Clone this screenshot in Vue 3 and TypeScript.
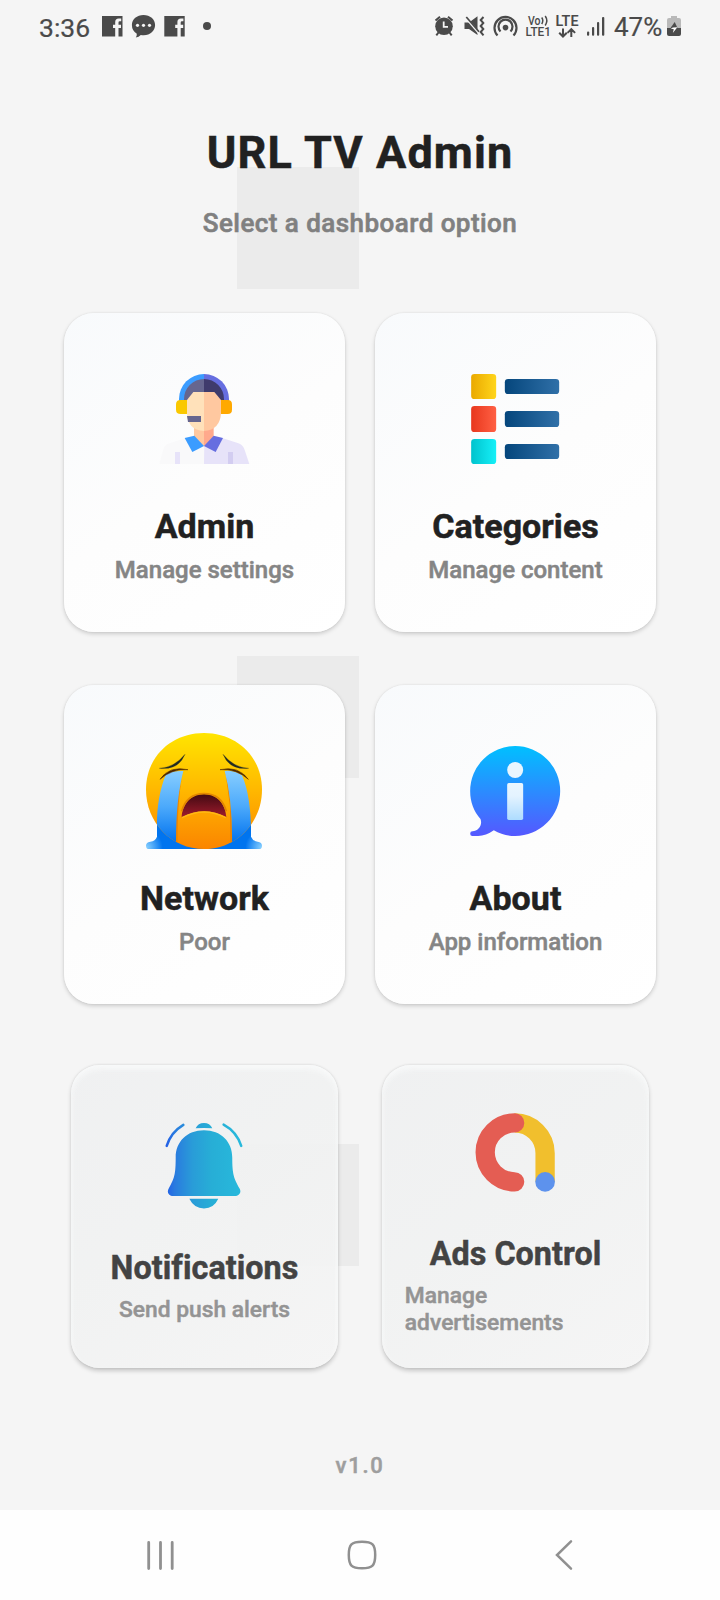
<script setup lang="ts">
type IconName = 'admin' | 'categories' | 'network' | 'about' | 'bell' | 'ads'

interface DashboardCard {
  icon: IconName
  title: string
  subtitle: string
  disabled?: boolean
}

const cards: DashboardCard[] = [
  { icon: 'admin', title: 'Admin', subtitle: 'Manage settings' },
  { icon: 'categories', title: 'Categories', subtitle: 'Manage content' },
  { icon: 'network', title: 'Network', subtitle: 'Poor' },
  { icon: 'about', title: 'About', subtitle: 'App information' },
  { icon: 'bell', title: 'Notifications', subtitle: 'Send push alerts', disabled: true },
  { icon: 'ads', title: 'Ads Control', subtitle: 'Manage advertisements', disabled: true },
]
</script>

<template>
  <div class="screen">
    <div class="pattern" aria-hidden="true">
      <span class="tile"></span>
      <span class="tile"></span>
      <span class="tile"></span>
    </div>

    <div class="status">
      <span class="clock">3:36</span>
      <svg class="notices" width="116" height="52" viewBox="98 0 116 52">
        <g fill="#4a4a4a">
          <path d="M102 16h20.500v20.500h-4v-8.500h2.500v-3.200h-2.500v-2.300q0-1.200 1.200-1.200h1.500v-2.900h-2.500q-3.500 0-3.500 3.700v2.700h-2.200v3.200h2.200v8.500h-13.200z" />
          <path d="M164.300 16h20.400v20.500h-4v-8.500h2.500v-3.200h-2.500v-2.300q0-1.200 1.200-1.200h1.500v-2.900h-2.500q-3.500 0-3.500 3.700v2.700h-2.200v3.200h2.200v8.500h-13.100z" />
          <path d="M143.500 15c6.500 0 11.600 4.300 11.600 10s-5 10.200-11.300 10.200q-1.600 0-3-.3-2 2.200-5 2.700 1.200-1.900 1-3.900-4.900-3-4.900-8.700c0-5.700 5.100-10 11.600-10z" />
          <circle cx="207" cy="26" r="4" />
        </g>
        <g fill="#f5f5f5"><circle cx="137.500" cy="25.300" r="1.600" /><circle cx="143.500" cy="25.300" r="1.600" /><circle cx="149.500" cy="25.300" r="1.600" /></g>
      </svg>
      <span class="spacer"></span>
      <svg class="signals" width="178" height="52" viewBox="432 0 178 52">
        <g fill="none" stroke="#4a4a4a" stroke-width="2">
          <circle cx="444" cy="26.300" r="8.800" fill="#4a4a4a" stroke="none" />
          <path d="M435.500 20.500l4.500-3.800M452.500 20.500l-4.500-3.800M438.500 32.500l-2.200 2.800M449.500 32.500l2.200 2.800" />
          <path d="M443.700 21.500v5.300h4.300" stroke="#f5f5f5" stroke-width="1.800" />
          <path d="M464.500 22.500h4.500l8.500-6.300v18.800l-8.500-6h-4.500z" fill="#4a4a4a" stroke="none" />
          <path d="M465 16.800l15 17.500" stroke="#f5f5f5" stroke-width="2.400" />
          <path d="M466.300 17l12.700 14.800" stroke-width="1.700" />
          <path d="M483.500 17l-2.800 3 2.600 3-2.600 3 2.600 3-2.600 3 2.800 3.300" />
          <path d="M497.500 35.500a11 11 0 1 1 16 0" stroke-width="2.200" />
          <path d="M500.500 31.500a7 7 0 1 1 10 0" stroke-width="2.200" />
          <circle cx="505.500" cy="27.600" r="2.800" fill="#4a4a4a" stroke="none" />
          <path d="M563 28.500v7.500m-3.800-3.300l3.800 3.800 3.800-3.800M571.300 37v-7.500m-3.800 3.400l3.800-3.800 3.800 3.800" />
          <path d="M541.700 17.500q2.200 3 0 6.500M545.200 16q3.200 4.500 0 9.500" stroke-width="1.500" />
        </g>
        <g fill="#4a4a4a">
          <rect x="587" y="31.500" width="2.200" height="4.300" rx="1" />
          <rect x="592" y="27" width="2.200" height="8.800" rx="1" />
          <rect x="597" y="22" width="2.200" height="13.800" rx="1" />
          <rect x="602" y="17" width="2.300" height="18.800" rx="1" />
          <text x="528" y="24.800" font-size="12" font-weight="500" textLength="12.500" lengthAdjust="spacingAndGlyphs">Vo</text>
          <text x="525.500" y="36" font-size="12" font-weight="500" textLength="25.500" lengthAdjust="spacingAndGlyphs">LTE1</text>
          <text x="555.500" y="25.500" font-size="14" font-weight="600" textLength="23" lengthAdjust="spacingAndGlyphs">LTE</text>
        </g>
      </svg>
      <span class="percent">47%</span>
      <svg class="battery" width="14" height="52" viewBox="667 0 14 52">
        <path d="M671 16h6v2h2q2 0 2 2v8.500h-14v-8.500q0-2 2-2h2z" fill="#b9b9b9" />
        <path d="M667 28h14v6q0 2-2 2h-10q-2 0-2-2z" fill="#4a4a4a" />
        <path d="M674.700 22l-4.200 6h7z" fill="#4a4a4a" />
        <path d="M677.300 27.300l-4.500 5.800 1-3.800-3-.8 2.200-1z" fill="#fff" />
      </svg>
    </div>

    <header class="heading">
      <h1>URL TV Admin</h1>
      <p>Select a dashboard option</p>
    </header>

    <main class="grid">
      <section v-for="card in cards" :key="card.title" class="card" :class="{ disabled: card.disabled }">
        <div class="icon-box">
          <svg v-if="card.icon === 'admin'" width="90" height="90" viewBox="330 222 270 270">
            <path d="M463 415l-58 0-47 15q-14 4-19 22l-11 40h135z" fill="#f9f9fa" />
            <path d="M463 415h56l44 14q16 5 21 21l14 42H462z" fill="#e7e3f9" />
            <path d="M375 456h15v36h-15z" fill="#e7e3f9" />
            <path d="M534 456h15v36h-15z" fill="#d3cdf1" />
            <path d="M432 380h31v60l-31-30z" fill="#ffc8a0" />
            <path d="M462 380h29v30l-29 29z" fill="#ffa98c" />
            <path d="M404 414l29-7 29 31-35 18z" fill="#3b9cff" />
            <path d="M519 414l-28-7-29 31 35 18z" fill="#666ee0" />
            <path d="M387 304v-7a75 75 0 0 1 75-75v82z" fill="#3b9cff" />
            <path d="M462 222a75 75 0 0 1 75 75v7h-75z" fill="#666ee0" />
            <path d="M402 304v-6a60 60 0 0 1 60-61v67z" fill="#66668f" />
            <path d="M462 237a60 60 0 0 1 60 61v6h-60z" fill="#3f3b6c" />
            <path d="M411 300l19-24h32v117q-50-3-51-55z" fill="#ffe1ba" />
            <path d="M462 276h31l20 24v38q-2 51-51 55z" fill="#ffc8a0" />
            <path d="M392 300h19v42h-19q-14 0-14-13v-16q0-13 14-13z" fill="#fac800" />
            <path d="M513 300h20q13 0 13 13v16q0 13-13 13h-20z" fill="#ffa900" />
            <path d="M411 348h42v18h-39z" fill="#66668f" />
          </svg>

          <svg v-else-if="card.icon === 'categories'" width="90" height="90" viewBox="332.500 222 270 270">
            <defs>
              <linearGradient id="cat-yellow"><stop stop-color="#eaa900" /><stop offset="1" stop-color="#ffd51b" /></linearGradient>
              <linearGradient id="cat-red"><stop stop-color="#e8371d" /><stop offset="1" stop-color="#ff6044" /></linearGradient>
              <linearGradient id="cat-cyan"><stop stop-color="#00c3cd" /><stop offset="1" stop-color="#16f0f8" /></linearGradient>
              <linearGradient id="cat-blue"><stop stop-color="#05467c" /><stop offset="1" stop-color="#3070a8" /></linearGradient>
            </defs>
            <rect x="333" y="222" width="75" height="75" rx="10" fill="url(#cat-yellow)" />
            <rect x="333" y="318" width="75" height="78" rx="10" fill="url(#cat-red)" />
            <rect x="333" y="417" width="75" height="75" rx="10" fill="url(#cat-cyan)" />
            <rect x="434" y="237" width="163" height="45" rx="10" fill="url(#cat-blue)" />
            <rect x="434" y="333" width="163" height="48" rx="10" fill="url(#cat-blue)" />
            <rect x="434" y="432" width="163" height="45" rx="10" fill="url(#cat-blue)" />
          </svg>

          <svg v-else-if="card.icon === 'network'" width="116" height="116" viewBox="291 279 348 348">
            <defs>
              <linearGradient id="face" x2="0" y2="1"><stop stop-color="#ffe500" /><stop offset=".5" stop-color="#ffb700" /><stop offset="1" stop-color="#fb8500" /></linearGradient>
              <linearGradient id="tear" gradientUnits="userSpaceOnUse" x1="0" y1="392" x2="0" y2="610"><stop stop-color="#88ceff" /><stop offset=".5" stop-color="#4ba9fb" /><stop offset="1" stop-color="#0071ee" /></linearGradient>
              <linearGradient id="mouth" x2="0" y2="1"><stop stop-color="#410a12" /><stop offset="1" stop-color="#a01b2c" /></linearGradient>
              <radialGradient id="puddle-left" gradientUnits="userSpaceOnUse" cx="288" cy="622" r="50"><stop stop-color="#8bd2ff" /><stop offset="1" stop-color="#0074ef" /></radialGradient>
              <radialGradient id="puddle-right" gradientUnits="userSpaceOnUse" cx="636" cy="622" r="50"><stop stop-color="#8bd2ff" /><stop offset="1" stop-color="#0074ef" /></radialGradient>
              <clipPath id="face-clip"><path d="M462 279c98 0 174 71 174 170 0 97-75 178-174 178S288 546 288 449c0-99 76-170 174-170z" /></clipPath>
            </defs>
            <path d="M321 550v40q-5 13-20 15-13 2-13 12 0 10 9 10h165v-77z" fill="url(#puddle-left)" />
            <path d="M603 550v40q5 13 20 15 13 2 13 12 0 10-9 10H462v-77z" fill="url(#puddle-right)" />
            <path d="M462 279c98 0 174 71 174 170 0 97-75 178-174 178S288 546 288 449c0-99 76-170 174-170z" fill="url(#face)" />
            <g clip-path="url(#face-clip)">
              <path d="M399 393q-17 84-16 218h-5V500zM526 393q20 84 20 218h-6V500z" fill="#ed8400" />
              <path d="M349 400q28-9 51-7-23 89-22 219v20h-57v-56c-2-65 6-123 28-176z" fill="url(#tear)" />
              <path d="M524 393q28-3 52 13 28 65 27 180v46h-57v-20q2-130-22-219z" fill="url(#tear)" />
            </g>
            <path d="M330 418q28-42 84-29-48-3-84 29zM595 418q-30-42-85-29 49-3 85 29z" fill="#4b2400" stroke="#4b2400" stroke-width="1.500" />
            <path d="M328 385q46-3 77-42-19 48-77 42zM596 385q-46-3-77-42 19 48 77 42z" fill="#222b24" stroke="#222b24" stroke-width=".8" />
            <path d="M395 532c2-37 25-70 67-70s65 33 67 70q-65-36-134 0z" fill="url(#mouth)" />
            <path d="M395 514q15-53 67-53t67 53" fill="none" stroke="#e38700" stroke-width="5" />
            <path d="M396 533q66-34 132 0" fill="none" stroke="#ffb914" stroke-width="4" />
          </svg>

          <svg v-else-if="card.icon === 'about'" width="90" height="90" viewBox="332.500 228 270 270">
            <defs>
              <linearGradient id="bubble" x2="0" y2="1"><stop stop-color="#00c0ff" /><stop offset="1" stop-color="#5558ff" /></linearGradient>
              <linearGradient id="letter" x2="0" y2="1"><stop stop-color="#eaf6ff" /><stop offset=".35" stop-color="#e4f3ff" /><stop offset="1" stop-color="#addcff" /></linearGradient>
            </defs>
            <path d="M465 228a135 135 0 1 1 0 270q-36 0-64-17-24 17-47 17h-17q-7 0-7-7t7-7c17 0 31-18 24-37-20-23-31-50-31-84a135 135 0 0 1 135-135z" fill="url(#bubble)" />
            <circle cx="465" cy="300" r="24" fill="#e9f6ff" />
            <rect x="441" y="339" width="48" height="111" rx="5" fill="url(#letter)" />
          </svg>

          <svg v-else-if="card.icon === 'bell'" width="90" height="90" viewBox="336.500 219 257 257">
            <defs>
              <linearGradient id="bell-fill" gradientUnits="userSpaceOnUse" x1="347" y1="0" x2="577" y2="0"><stop stop-color="#235fe7" /><stop offset=".12" stop-color="#297bdf" /><stop offset=".35" stop-color="#299cd8" /><stop offset=".6" stop-color="#27aed6" /><stop offset="1" stop-color="#28b9dc" /></linearGradient>
            </defs>
            <g fill="url(#bell-fill)">
              <path d="M462 241c51 0 85 34 85 82 0 51 5 63 22 93 7 12-2 23-15 23H370c-13 0-21-11-14-23 17-30 21-42 21-93 0-48 34-82 85-82z" />
              <path d="M437 235q7-16 25-16t25 16q-25-2-50 0zM418 447h87q-13 29-43 29t-44-29z" />
            </g>
            <path d="M400 225q-37 22-50 63M521 224q39 21 53 64" fill="none" stroke="url(#bell-fill)" stroke-width="7.500" stroke-linecap="round" />
          </svg>

          <svg v-else width="82" height="82" viewBox="349 190 234 234">
            <path d="M462 218.500a91 91 0 0 1 91.500 91V395" fill="none" stroke="#f1bf2d" stroke-width="58" />
            <path d="M462 218.500a88 88 0 0 0 0 177" fill="none" stroke="#e45d53" stroke-width="58" stroke-linecap="round" />
            <circle cx="553.500" cy="395.500" r="29.500" fill="#5d92ed" />
          </svg>
        </div>
        <h2>{{ card.title }}</h2>
        <p>{{ card.subtitle }}</p>
      </section>
    </main>

    <footer class="version">v1.0</footer>

    <nav class="navbar">
      <svg width="28" height="30" viewBox="147 1540 28 30">
        <path d="M148.700 1542.500v26M160.500 1542.500v26M172.200 1542.500v26" fill="none" stroke="#909090" stroke-width="2.800" stroke-linecap="round" />
      </svg>
      <svg class="home" width="30" height="30" viewBox="346.500 1540.500 30 30">
        <path d="M361.500 1542.300c10.500 0 13.200 2.700 13.200 13.200s-2.700 13.200-13.200 13.200-13.200-2.700-13.200-13.200 2.700-13.200 13.200-13.200z" fill="none" stroke="#909090" stroke-width="2.500" />
      </svg>
      <svg width="18" height="30" viewBox="555 1540.500 18 30">
        <path d="M571 1541.800l-14 13.700 14 13.700" fill="none" stroke="#909090" stroke-width="2.500" stroke-linecap="round" />
      </svg>
    </nav>
  </div>
</template>

<style>
body {
  margin: 0;
  background: #f5f5f5;
}
</style>

<style scoped>
.screen {
  position: relative;
  isolation: isolate;
  width: 720px;
  height: 1600px;
  display: flex;
  flex-direction: column;
  overflow: hidden;
  background: #f5f5f5;
  font-family: Roboto, "Liberation Sans", sans-serif;
}

h1, h2, p {
  margin: 0;
}

svg {
  display: block;
  flex: none;
  overflow: visible;
}

.pattern {
  position: absolute;
  z-index: -1;
  top: 167px;
  left: 237px;
  display: flex;
  flex-direction: column;
  gap: 366.500px;
}

.tile {
  width: 122px;
  height: 122px;
  background: #ebebeb;
}

.status {
  display: flex;
  align-items: center;
  height: 52px;
  padding: 0 39px 0 39px;
  color: #4a4a4a;
}

.clock {
  width: 59px;
  padding-top: 2px;
  font-size: 26.500px;
  -webkit-text-stroke: 0.2px currentColor;
  white-space: nowrap;
}

.spacer {
  flex: 1;
}

.percent {
  width: 57px;
  padding: 2px 0 0 4px;
  font-size: 26px;
  -webkit-text-stroke: 0.2px currentColor;
  box-sizing: border-box;
  white-space: nowrap;
}

.heading {
  height: 261px;
  box-sizing: border-box;
  padding-top: 75px;
  text-align: center;
}

h1 {
  height: 52px;
  font-size: 45px;
  line-height: 52px;
  font-weight: 700;
  letter-spacing: 1.1px;
  -webkit-text-stroke: 0.5px currentColor;
  color: #212121;
}

.heading p {
  margin-top: 28px;
  font-size: 26px;
  line-height: 32px;
  font-weight: 500;
  letter-spacing: 0.45px;
  -webkit-text-stroke: 0.6px currentColor;
  color: #808080;
}

.grid {
  display: grid;
  grid-template-columns: 281px 281px;
  grid-auto-rows: 319px;
  gap: 53px 30px;
  justify-content: center;
}

.card {
  display: flex;
  flex-direction: column;
  align-items: center;
  justify-content: center;
  box-sizing: border-box;
  padding: 0 24px;
  border-radius: 30px;
  background: linear-gradient(145deg, #f8fafc 0%, #fdfdfd 50%, #ffffff 100%);
  box-shadow: 0 2px 4px rgba(0, 0, 0, 0.17), 0 0 2px rgba(0, 0, 0, 0.09);
}

.card.disabled {
  transform: scale(0.95);
  background: linear-gradient(145deg, rgba(239, 240, 241, 0.92), rgba(241, 242, 242, 0.92) 50%, rgba(245, 245, 245, 0.92));
  box-shadow: 0 3px 5px rgba(0, 0, 0, 0.18), 0 0 2px rgba(0, 0, 0, 0.05), inset 0 4px 8px rgba(252, 254, 254, 0.75);
}

.icon-box {
  display: flex;
  align-items: center;
  justify-content: center;
  width: 116px;
  height: 116px;
}

h2 {
  margin-top: 29px;
  font-size: 34px;
  line-height: 40px;
  font-weight: 700;
  letter-spacing: 0.05px;
  -webkit-text-stroke: 0.5px currentColor;
  color: #212121;
  white-space: nowrap;
}

.card p {
  margin-top: 10px;
  font-size: 24px;
  line-height: 28px;
  font-weight: 500;
  -webkit-text-stroke: 0.5px currentColor;
  color: #858585;
}

.disabled h2 {
  color: #434343;
}

.disabled p {
  color: #949494;
}

.version {
  margin-top: 76px;
  height: 58px;
  font-size: 22px;
  line-height: 28px;
  font-weight: 500;
  letter-spacing: 1.7px;
  -webkit-text-stroke: 0.5px currentColor;
  text-align: center;
  color: #9e9e9e;
}

.navbar {
  display: flex;
  align-items: center;
  justify-content: space-between;
  box-sizing: border-box;
  height: 90px;
  padding: 1px 147px;
  background: #fefefe;
}

.home {
  margin-right: 7px;
}
</style>
